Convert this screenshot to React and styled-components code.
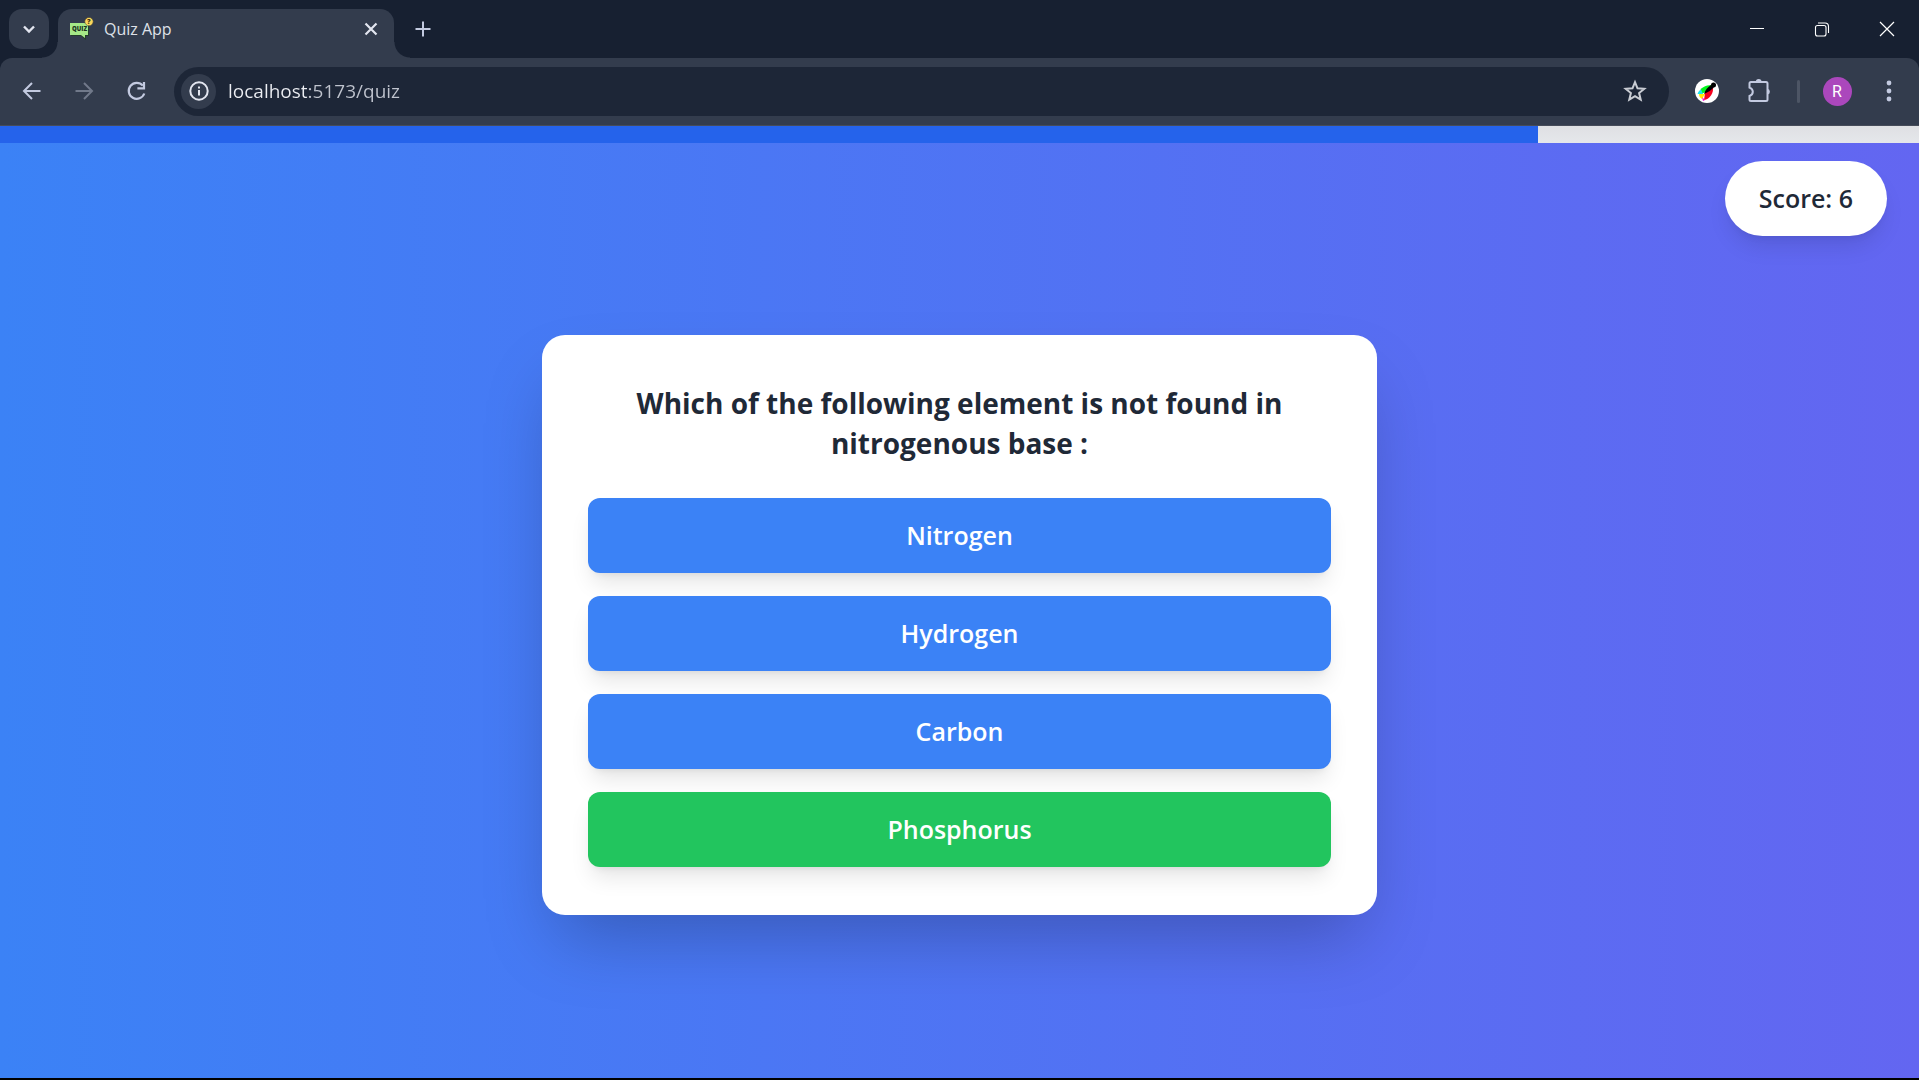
import React from "react";
import styled, { createGlobalStyle, css } from "styled-components";

const uiFont = css`
  font-family: "Open Sans", "Noto Sans", sans-serif;
`;

const GlobalStyle = createGlobalStyle`
  *, *::before, *::after { box-sizing: border-box; }
  html, body, #root { height: 100%; }
  body { margin: 0; background: #000; overflow: hidden; }
  button, input { font: inherit; color: inherit; }
`;

const Window = styled.div`
  ${uiFont}
  display: flex;
  flex-direction: column;
  height: 100vh;
  border-bottom: 2px solid #000;
`;

/* ---------- browser frame ---------- */

const TabStrip = styled.header`
  display: flex;
  align-items: flex-start;
  height: 58px;
  padding-left: 9px;
  background: #172031;
`;

const PlainButton = styled.button`
  display: flex;
  align-items: center;
  justify-content: center;
  flex: none;
  padding: 0;
  border: 0;
  background: transparent;
`;

const TabSearch = styled(PlainButton)`
  width: 40px;
  height: 40px;
  margin: 9px 9px 0 0;
  border-radius: 13px;
  background: #333c4d;
`;

const Tab = styled.div`
  position: relative;
  display: flex;
  align-items: center;
  width: 336px;
  height: 49px;
  margin-top: 9px;
  padding: 0 13px 9px 12px;
  border-radius: 14px 14px 0 0;
  background: #333c4d;

  &::before,
  &::after {
    content: "";
    position: absolute;
    bottom: 0;
    width: 16px;
    height: 16px;
  }
  &::before {
    right: 100%;
    background: radial-gradient(circle at 0 0, transparent 15px, #333c4d 16px);
  }
  &::after {
    left: 100%;
    background: radial-gradient(circle at 100% 0, transparent 15px, #333c4d 16px);
  }
`;

const TabTitle = styled.span`
  flex: 1;
  margin-left: 10px;
  color: #dfe1e8;
  font-size: 16px;
  line-height: 24px;
`;

const CloseTab = styled(PlainButton)`
  width: 20px;
  height: 20px;
`;

const NewTab = styled(PlainButton)`
  width: 40px;
  height: 40px;
  margin: 9px 0 0 9px;
`;

const WindowControls = styled.div`
  display: flex;
  margin-left: auto;
`;

const WindowButton = styled(PlainButton)`
  width: 65px;
  height: 58px;
`;

const ToolbarBack = styled.div`
  background: #172031;
`;

const Toolbar = styled.nav`
  display: flex;
  align-items: center;
  height: 68px;
  padding: 0 4px 1px 6px;
  border-bottom: 1px solid #464c59;
  border-radius: 12px 12px 0 0;
  background: #333c4d;
`;

const ToolButton = styled(PlainButton)`
  width: 52px;
  height: 48px;
`;

const AddressBar = styled.label`
  display: flex;
  align-items: center;
  flex: 1;
  height: 49px;
  margin: 0 12px;
  padding: 0 17px 0 7px;
  border-radius: 25px;
  background: #1d2637;
`;

const SiteInfo = styled(PlainButton)`
  width: 35px;
  height: 35px;
  margin-right: 12px;
  border-radius: 50%;
  background: #333c4d;
`;

const Address = styled.input`
  flex: 1;
  min-width: 0;
  padding: 0;
  border: 0;
  outline: 0;
  font-size: 19px;
  line-height: 28px;
  color: transparent;
  background: linear-gradient(90deg, #eceef3 81px, #c0c4ce 81px);
  background-clip: text;
`;

const StarButton = styled(PlainButton)`
  width: 35px;
  height: 35px;
`;

const Divider = styled.span`
  width: 3px;
  height: 23px;
  margin: 0 11px 0 12px;
  border-radius: 2px;
  background: #4d5565;
`;

const Avatar = styled.span`
  width: 29px;
  height: 29px;
  border-radius: 50%;
  background: #ab47bc;
  color: #fff;
  font: 16px/29px Roboto, sans-serif;
  text-align: center;
`;

/* ---------- quiz page ---------- */

const Page = styled.main`
  display: flex;
  flex-direction: column;
  flex: 1;
  background: linear-gradient(90deg, #3b82f6, #6366f1);
`;

const Track = styled.div`
  height: 17px;
  background: linear-gradient(#dfe0e3, #e5e7eb);
`;

const Fill = styled.div`
  height: 100%;
  background: #2563eb;
`;

const ScoreRow = styled.div`
  display: flex;
  justify-content: flex-end;
  padding: 18px 32px 0;
`;

const Score = styled.output`
  padding: 20px 34px;
  border-radius: 38px;
  background: #fff;
  color: #1f2937;
  font-size: 25px;
  font-weight: 600;
  line-height: 35px;
  box-shadow: 0 14px 22px -4px rgba(0, 0, 0, 0.1), 0 6px 9px -6px rgba(0, 0, 0, 0.1);
`;

const Card = styled.section`
  width: 835px;
  max-width: 100%;
  margin: 99px auto 0;
  padding: 48px 46px;
  border-radius: 23px;
  background: #fff;
  box-shadow: 0 36px 72px -17px rgba(0, 0, 0, 0.25);
`;

const Question = styled.h1`
  margin: 0 0 35px;
  color: #1f2937;
  font-size: 28px;
  font-weight: 700;
  line-height: 40px;
  text-align: center;
`;

const Options = styled.div`
  display: grid;
  gap: 23px;
`;

const Option = styled.button`
  padding: 20px;
  border: 0;
  border-radius: 12px;
  background: ${(p) => (p.$correct ? "#22c55e" : "#3b82f6")};
  color: #fff;
  font-size: 25px;
  font-weight: 600;
  line-height: 35px;
  box-shadow: 0 14px 22px -4px rgba(0, 0, 0, 0.1), 0 6px 9px -6px rgba(0, 0, 0, 0.1);
`;

/* ---------- icons ---------- */

const Svg = ({ size = 24, color = "#c3cae0", width = 2, children }) => (
  <svg
    width={size}
    height={size}
    viewBox={`0 0 ${size} ${size}`}
    fill="none"
    stroke={color}
    strokeWidth={width}
    aria-hidden="true"
  >
    {children}
  </svg>
);

const QuizLogo = () => (
  <svg width="24" height="24" viewBox="0 0 24 24" aria-hidden="true">
    <path d="M1 6H19V19H16V23L11 19H1Z" fill="#233d2b" />
    <path d="M0 6H18V18H15V21L11 18H0Z" fill="#a5e887" />
    <text x="2" y="14" fontFamily="Open Sans, sans-serif" fontSize="6" fontWeight="800" fill="#20351f">QUIZ</text>
    <circle cx="19" cy="4.6" r="4.2" fill="#f9d65c" stroke="#4d4630" strokeWidth="0.6" />
    <text x="17" y="7" fontFamily="Open Sans, sans-serif" fontSize="7" fontWeight="800" fill="#3a3012">?</text>
  </svg>
);

const FeatherLogo = () => (
  <svg width="24" height="24" viewBox="0 0 24 24" aria-hidden="true">
    <circle cx="12" cy="12" r="12" fill="#fff" />
    <path d="M4 14C5 9 10 6 17 6L13 12L6 15Z" fill="#00f51a" />
    <path d="M2.5 15C3 13 4 12 6 10.5L8 15Z" fill="#19e6f2" />
    <path d="M4 15H10L7 20C5 19 4 17 4 15Z" fill="#ffee00" />
    <path d="M18 7C19 14 15 20 9 21L10 14Z" fill="#f5001d" />
    <path d="M7 18L10 21L8 22Z" fill="#ff00d4" />
    <path d="M9 15C10 11 13 8 16 6L19 8C17 11 13 13 9 15Z" fill="#000" />
    <circle cx="18.5" cy="6" r="2.5" fill="#000" />
  </svg>
);

const OPTIONS = ["Nitrogen", "Hydrogen", "Carbon", "Phosphorus"];
const ANSWER = "Phosphorus";
const PROGRESS = 80.15;

export default function App() {
  return (
    <Window>
      <GlobalStyle />
      <TabStrip>
        <TabSearch aria-label="Search tabs">
          <Svg size={14} color="#e3e6f0" width={2.4}><path d="M2 4.5L7 9.5L12 4.5" /></Svg>
        </TabSearch>
        <Tab>
          <QuizLogo />
          <TabTitle>Quiz App</TabTitle>
          <CloseTab aria-label="Close tab">
            <Svg size={14} color="#e3e6f0" width={2.2}><path d="M1.5 1.5L12.5 12.5M12.5 1.5L1.5 12.5" /></Svg>
          </CloseTab>
        </Tab>
        <NewTab aria-label="New tab">
          <Svg size={16}><path d="M8 0.5V15.5M0.5 8H15.5" /></Svg>
        </NewTab>
        <WindowControls>
          <WindowButton aria-label="Minimize">
            <Svg size={14} color="#fff" width={1}><path d="M0 6.5H14" /></Svg>
          </WindowButton>
          <WindowButton aria-label="Restore">
            <Svg size={16} color="#fff" width={1.1}>
              <rect x="1.5" y="4.5" width="10.5" height="10.5" rx="2" />
              <path d="M4 2H11Q14.5 2 14.5 5.5V12" />
            </Svg>
          </WindowButton>
          <WindowButton aria-label="Close">
            <Svg size={16} color="#fff" width={1.2}><path d="M1 1L15 15M15 1L1 15" /></Svg>
          </WindowButton>
        </WindowControls>
      </TabStrip>

      <ToolbarBack>
        <Toolbar>
          <ToolButton aria-label="Back">
            <Svg size={20}><path d="M18.5 10H2.5M10 2L2 10L10 18" /></Svg>
          </ToolButton>
          <ToolButton aria-label="Forward">
            <Svg size={20} color="#71798a"><path d="M1.5 10H17.5M10 2L18 10L10 18" /></Svg>
          </ToolButton>
          <ToolButton aria-label="Reload">
            <Svg size={20} width={2.2}>
              <path d="M18.3 12.5A8 8 0 1 1 16.8 4.6" />
              <path d="M18 1V7.4H11.4" />
            </Svg>
          </ToolButton>
          <AddressBar>
            <SiteInfo aria-label="View site information">
              <Svg size={20} color="#e3e6f0">
                <circle cx="10" cy="10" r="8.7" />
                <path d="M10 9V14.5M10 5.5V7.5" />
              </Svg>
            </SiteInfo>
            <Address aria-label="Address" defaultValue="localhost:5173/quiz" />
            <StarButton aria-label="Bookmark this tab">
              <Svg size={24} color="#c9ccd3">
                <path d="M12 3.2L14.5 9.3L21.3 9.8L16.1 14.1L17.7 20.6L12 17.1L6.3 20.6L7.9 14.1L2.7 9.8L9.5 9.3Z" />
              </Svg>
            </StarButton>
          </AddressBar>
          <ToolButton aria-label="Color picker extension"><FeatherLogo /></ToolButton>
          <ToolButton aria-label="Extensions">
            <Svg size={26}>
              <path d="M5 4H20Q21.5 4 21.5 5.5V21.5Q21.5 23 20 23H5Q3.5 23 3.5 21.5V18Q6.8 16.8 6.8 13.8T3.5 9.6V5.5Q3.5 4 5 4Z" />
              <path d="M9.8 4A2.9 3 0 0 1 15.6 4ZM21.5 10.8A3.2 3 0 0 1 21.5 16.6Z" fill="#c3cae0" stroke="none" />
            </Svg>
          </ToolButton>
          <Divider />
          <ToolButton aria-label="Profile"><Avatar>R</Avatar></ToolButton>
          <ToolButton aria-label="Menu">
            <svg width="6" height="22" viewBox="0 0 6 22" fill="#c3cae0" aria-hidden="true">
              <circle cx="3" cy="3" r="2.4" />
              <circle cx="3" cy="11" r="2.4" />
              <circle cx="3" cy="19" r="2.4" />
            </svg>
          </ToolButton>
        </Toolbar>
      </ToolbarBack>

      <Page>
        <Track role="progressbar" aria-label="Quiz progress" aria-valuenow={PROGRESS} aria-valuemin={0} aria-valuemax={100}>
          <Fill style={{ width: `${PROGRESS}%` }} />
        </Track>
        <ScoreRow>
          <Score>Score: 6</Score>
        </ScoreRow>
        <Card>
          <Question>Which of the following element is not found in nitrogenous base :</Question>
          <Options>
            {OPTIONS.map((name) => (
              <Option key={name} type="button" $correct={name === ANSWER}>{name}</Option>
            ))}
          </Options>
        </Card>
      </Page>
    </Window>
  );
}
